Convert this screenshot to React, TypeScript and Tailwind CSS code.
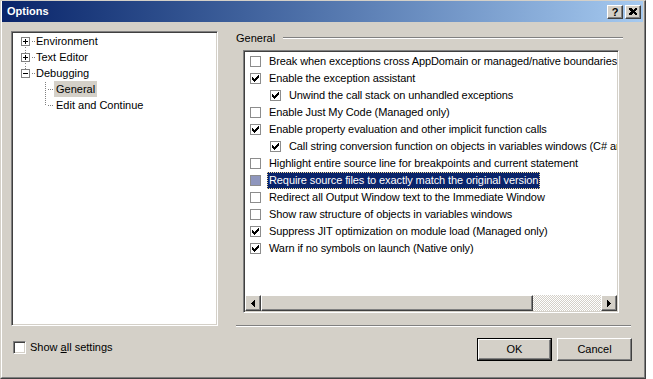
import React from "react";

type Opt = { label: string; checked: boolean; indent?: boolean; selected?: boolean };

const options: Opt[] = [
  { label: "Break when exceptions cross AppDomain or managed/native boundaries", checked: false },
  { label: "Enable the exception assistant", checked: true },
  { label: "Unwind the call stack on unhandled exceptions", checked: true, indent: true },
  { label: "Enable Just My Code (Managed only)", checked: false },
  { label: "Enable property evaluation and other implicit function calls", checked: true },
  { label: "Call string conversion function on objects in variables windows (C# and J# only)", checked: true, indent: true },
  { label: "Highlight entire source line for breakpoints and current statement", checked: false },
  { label: "Require source files to exactly match the original version", checked: false, selected: true },
  { label: "Redirect all Output Window text to the Immediate Window", checked: false },
  { label: "Show raw structure of objects in variables windows", checked: false },
  { label: "Suppress JIT optimization on module load (Managed only)", checked: true },
  { label: "Warn if no symbols on launch (Native only)", checked: true },
];

// classic 7x7 check glyph
const CHECK = ["......X", ".....XX", "X...XXX", "XX.XXX.", "XXXXX..", ".XXX...", "..X...."];

function CheckGlyph() {
  return (
    <svg width="7" height="7" shapeRendering="crispEdges">
      {CHECK.flatMap((row, y) =>
        row.split("").map((c, x) => (c === "X" ? <rect key={`${x}-${y}`} x={x} y={y} width="1" height="1" fill="#000" /> : null))
      )}
    </svg>
  );
}

function ListCheck({ checked, selected }: { checked: boolean; selected?: boolean }) {
  return (
    <div
      className={`w-[11px] h-[11px] shrink-0 border border-[#8c8c8c] flex items-center justify-center ${
        selected ? "bg-[#8e96bd]" : "bg-white"
      }`}
    >
      {checked && <CheckGlyph />}
    </div>
  );
}

function Arrow({ dir }: { dir: "left" | "right" }) {
  return (
    <svg width="4" height="7" shapeRendering="crispEdges">
      {dir === "right" ? <polygon points="0,0 4,3.5 0,7" fill="#000" /> : <polygon points="4,0 0,3.5 4,7" fill="#000" />}
    </svg>
  );
}

const raised =
  "border border-t-white border-l-white border-r-[#404040] border-b-[#404040] shadow-[inset_-1px_-1px_0_#808080] bg-[#d4d0c8]";

function Dots({ x1, y1, x2, y2 }: { x1: number; y1: number; x2: number; y2: number }) {
  return <line x1={x1 + 0.5} y1={y1 + 0.5} x2={x2 + 0.5} y2={y2 + 0.5} stroke="#808080" strokeDasharray="1 1" />;
}

function Expander({ open, above, below }: { open: boolean; above: boolean; below: boolean }) {
  return (
    <svg width="23" height="16" shapeRendering="crispEdges" className="shrink-0">
      {above && <Dots x1={12} y1={0} x2={12} y2={3} />}
      {below && <Dots x1={12} y1={13} x2={12} y2={16} />}
      <Dots x1={18} y1={8} x2={21} y2={8} />
      <rect x="8.5" y="4.5" width="8" height="8" fill="#fff" stroke="#808080" />
      <line x1="10" y1="8.5" x2="15" y2="8.5" stroke="#000" />
      {!open && <line x1="12.5" y1="6" x2="12.5" y2="11" stroke="#000" />}
    </svg>
  );
}

function Child({ last }: { last: boolean }) {
  return (
    <svg width="41" height="16" shapeRendering="crispEdges" className="shrink-0">
      <Dots x1={32} y1={0} x2={32} y2={last ? 8 : 16} />
      <Dots x1={34} y1={8} x2={40} y2={8} />
    </svg>
  );
}

export default function App() {
  return (
    <div className="w-[653px] h-[379px] bg-white font-['Liberation_Sans',Arial,sans-serif] text-[11px] text-black">
      <div className="w-[646px] h-[379px] border border-t-[#d4d0c8] border-l-[#d4d0c8] border-r-[#404040] border-b-[#404040] bg-[#d4d0c8]">
        <div className="h-full border-l border-l-white border-r border-r-[#808080] border-b border-b-[#808080] pr-[1px] flex flex-col">
          {/* Title bar */}
          <div className="h-[21px] shrink-0 bg-linear-to-r from-[#0a246a] to-[#a6caf0] flex items-center pl-[5px] pr-[2px]">
            <span className="text-white font-bold leading-none">Options</span>
            <div className="ml-auto flex gap-[2px]">
              <div className={`${raised} w-[16px] h-[14px] flex items-center justify-center font-bold text-[11px] leading-none pt-[1px]`}>?</div>
              <div className={`${raised} w-[16px] h-[14px] flex items-center justify-center`}>
                <svg width="8" height="7" shapeRendering="crispEdges">
                  <path d="M0 0h2l2 2 2-2h2v1l-2 2.5 2 2.5v1h-2l-2-2-2 2h-2v-1l2-2.5-2-2.5z" fill="#000" />
                </svg>
              </div>
            </div>
          </div>

          {/* Main */}
          <div className="flex items-start pl-[9px] pt-[9px]">
            {/* Tree */}
            <div className="w-[207px] h-[295px] shrink-0 bg-white border border-t-[#808080] border-l-[#808080] border-r-white border-b-white shadow-[inset_1px_1px_0_#404040,inset_-1px_-1px_0_#d4d0c8] p-[1px]">
              <div className="flex items-center h-[16px]">
                <Expander open={false} above={false} below />
                <span className="leading-[16px]">Environment</span>
              </div>
              <div className="flex items-center h-[16px]">
                <Expander open={false} above below />
                <span className="leading-[16px]">Text Editor</span>
              </div>
              <div className="flex items-center h-[16px]">
                <Expander open above below={false} />
                <span className="leading-[16px]">Debugging</span>
              </div>
              <div className="flex items-center h-[16px]">
                <Child last={false} />
                <span className="leading-[16px] bg-[#d4d0c8] px-[2px]">General</span>
              </div>
              <div className="flex items-center h-[16px]">
                <Child last />
                <span className="leading-[16px] px-[2px]">Edit and Continue</span>
              </div>
            </div>

            {/* Right side */}
            <div className="ml-[18px] w-[395px] flex flex-col">
              <div className="h-[14px] flex items-center">
                <span className="leading-[14px]">General</span>
                <div className="flex-1 ml-[8px] mr-[8px] h-[2px] border-t border-t-[#808080] border-b border-b-white" />
              </div>
              <div className="mt-[5px] ml-[7px] w-[376px] h-[263px] bg-white border border-t-[#808080] border-l-[#808080] border-r-white border-b-white shadow-[inset_1px_1px_0_#404040,inset_-1px_-1px_0_#d4d0c8] p-[1px] flex flex-col">
                <div className="flex-1 overflow-hidden pt-[1px]">
                  {options.map((o) => (
                    <div
                      key={o.label}
                      className={`h-[17px] flex items-center whitespace-nowrap tracking-[-0.1px] ${o.indent ? "pl-[25px]" : "pl-[5px]"}`}
                    >
                      <ListCheck checked={o.checked} selected={o.selected} />
                      <span
                        className={`ml-[6px] leading-[15px] px-[1px] border ${
                          o.selected
                            ? "bg-[#0a246a] text-white border-dotted border-[#f5db95]"
                            : "border-transparent"
                        }`}
                      >
                        {o.label}
                      </span>
                    </div>
                  ))}
                </div>
                {/* Horizontal scrollbar */}
                <div className="h-[16px] flex shrink-0">
                  <div className={`${raised} w-[16px] h-[16px] flex items-center justify-center`}>
                    <Arrow dir="left" />
                  </div>
                  <div className={`${raised} w-[272px] h-[16px]`} />
                  <div className="flex-1 bg-[image:repeating-conic-gradient(#d4d0c8_0_25%,#ffffff_0_50%)] bg-size-[2px_2px]" />
                  <div className={`${raised} w-[16px] h-[16px] flex items-center justify-center`}>
                    <Arrow dir="right" />
                  </div>
                </div>
              </div>
              <div className="mt-[12px] h-[2px] border-t border-t-[#808080] border-b border-b-white" />
            </div>
          </div>

          {/* Bottom */}
          <div className="mt-[11px] flex items-start pl-[11px] pr-[11px]">
            <div className="mt-[3px] flex items-center">
              <div className="w-[13px] h-[13px] bg-white border border-t-[#808080] border-l-[#808080] border-r-white border-b-white shadow-[inset_1px_1px_0_#404040,inset_-1px_-1px_0_#d4d0c8]" />
              <span className="ml-[4px] leading-[13px]">
                Show <span className="underline">a</span>ll settings
              </span>
            </div>
            <div className="ml-auto flex gap-[5px]">
              <div className="w-[75px] h-[23px] border border-black">
                <div className={`${raised} w-full h-full flex items-center justify-center`}>OK</div>
              </div>
              <div className={`${raised} w-[75px] h-[23px] flex items-center justify-center`}>Cancel</div>
            </div>
          </div>
        </div>
      </div>
    </div>
  );
}
